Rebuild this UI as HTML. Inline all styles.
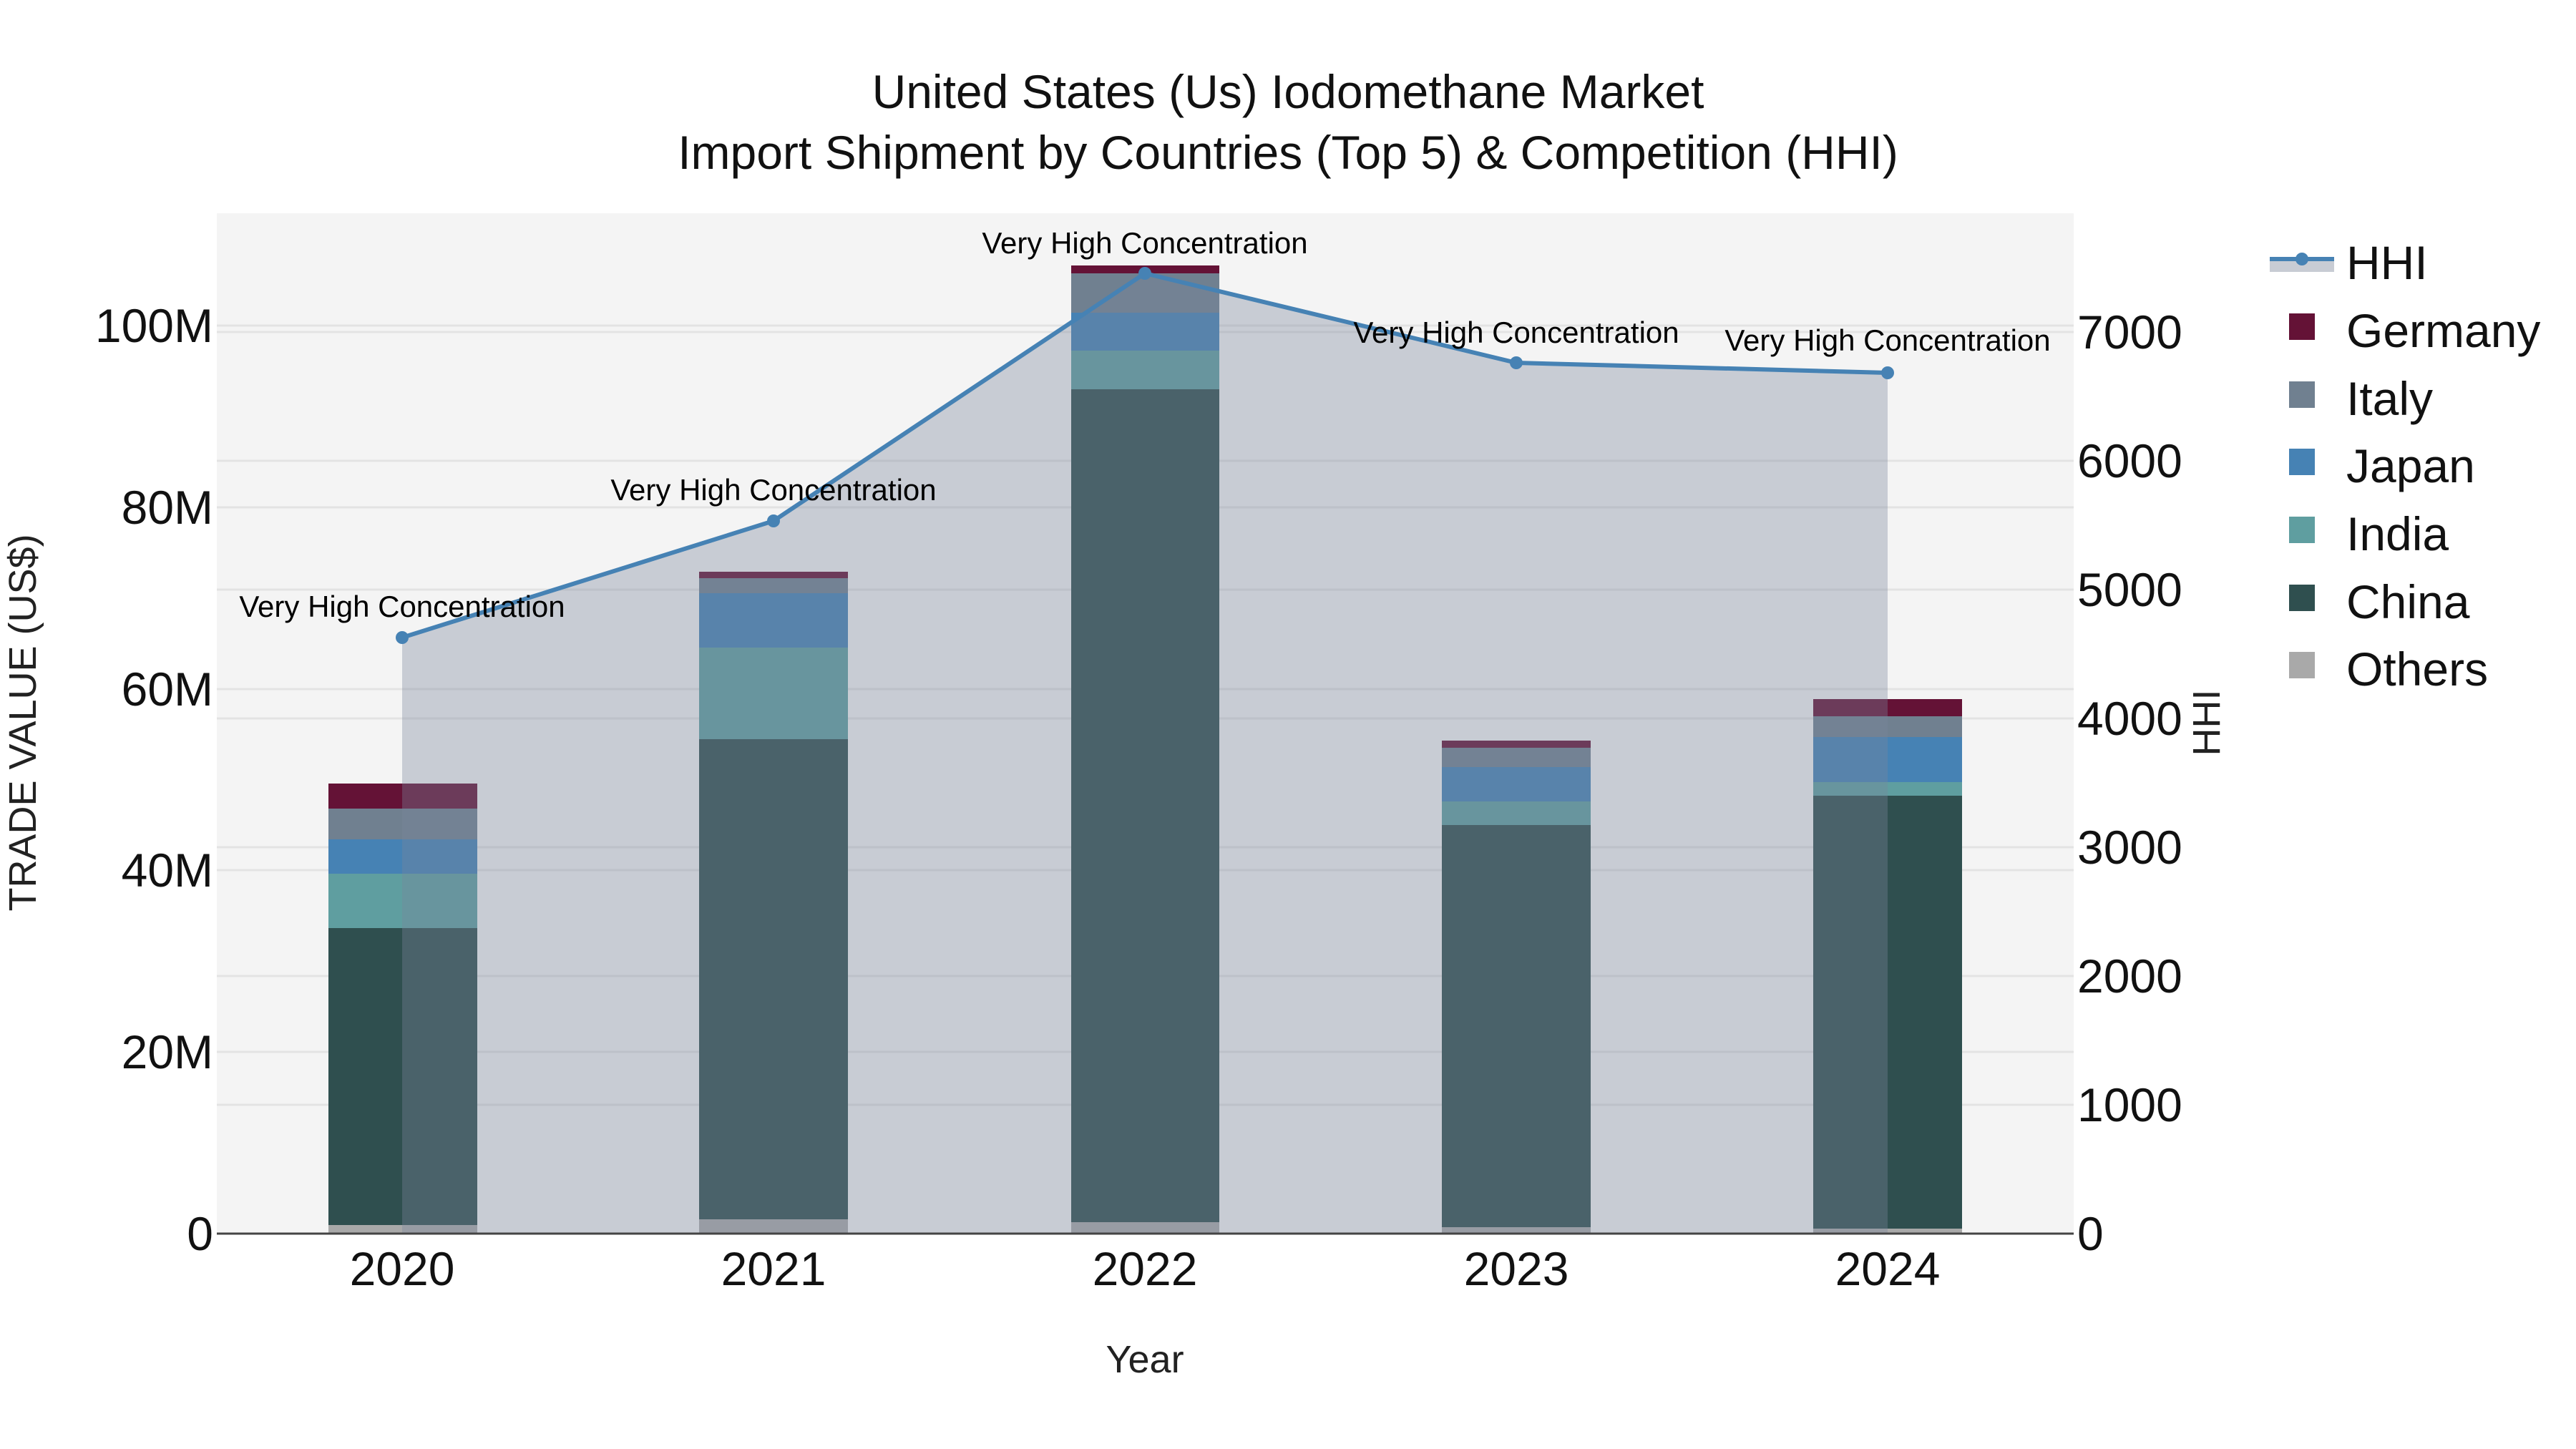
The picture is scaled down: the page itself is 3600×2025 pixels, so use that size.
<!DOCTYPE html>
<html><head><meta charset="utf-8"><style>
html,body{margin:0;padding:0;background:#fff;}
svg{display:block;font-family:"Liberation Sans",Arial,sans-serif;}
</style></head><body>
<svg width="3600" height="2025" viewBox="0 0 3600 2025" xmlns="http://www.w3.org/2000/svg">
<rect x="0" y="0" width="3600" height="2025" fill="#fff"/>
<rect x="303" y="298" width="2595" height="1426" fill="#f4f4f4"/>
<g stroke="#e3e3e3" stroke-width="3">
<line x1="303" x2="2898" y1="1470" y2="1470"/><line x1="303" x2="2898" y1="1216" y2="1216"/>
<line x1="303" x2="2898" y1="963" y2="963"/><line x1="303" x2="2898" y1="709" y2="709"/>
<line x1="303" x2="2898" y1="455" y2="455"/>
<line x1="303" x2="2898" y1="1544" y2="1544"/><line x1="303" x2="2898" y1="1364" y2="1364"/>
<line x1="303" x2="2898" y1="1184" y2="1184"/><line x1="303" x2="2898" y1="1004" y2="1004"/>
<line x1="303" x2="2898" y1="824" y2="824"/><line x1="303" x2="2898" y1="644" y2="644"/>
<line x1="303" x2="2898" y1="464" y2="464"/>
</g>
<g>
<rect x="459" y="1712" width="208" height="12" fill="#a9a9a9"/>
<rect x="459" y="1297" width="208" height="415" fill="#2f4f4f"/>
<rect x="459" y="1221" width="208" height="76" fill="#5f9ea0"/>
<rect x="459" y="1173" width="208" height="48" fill="#4682b4"/>
<rect x="459" y="1130" width="208" height="43" fill="#708090"/>
<rect x="459" y="1095" width="208" height="35" fill="#641236"/>
<rect x="977" y="1704" width="208" height="20" fill="#a9a9a9"/>
<rect x="977" y="1033" width="208" height="671" fill="#2f4f4f"/>
<rect x="977" y="905" width="208" height="128" fill="#5f9ea0"/>
<rect x="977" y="829" width="208" height="76" fill="#4682b4"/>
<rect x="977" y="808" width="208" height="21" fill="#708090"/>
<rect x="977" y="799" width="208" height="9" fill="#641236"/>
<rect x="1497" y="1708" width="207" height="16" fill="#a9a9a9"/>
<rect x="1497" y="544" width="207" height="1164" fill="#2f4f4f"/>
<rect x="1497" y="490" width="207" height="54" fill="#5f9ea0"/>
<rect x="1497" y="437" width="207" height="53" fill="#4682b4"/>
<rect x="1497" y="382" width="207" height="55" fill="#708090"/>
<rect x="1497" y="371" width="207" height="11" fill="#641236"/>
<rect x="2015" y="1715" width="208" height="9" fill="#a9a9a9"/>
<rect x="2015" y="1153" width="208" height="562" fill="#2f4f4f"/>
<rect x="2015" y="1120" width="208" height="33" fill="#5f9ea0"/>
<rect x="2015" y="1072" width="208" height="48" fill="#4682b4"/>
<rect x="2015" y="1045" width="208" height="27" fill="#708090"/>
<rect x="2015" y="1035" width="208" height="10" fill="#641236"/>
<rect x="2534" y="1717" width="208" height="7" fill="#a9a9a9"/>
<rect x="2534" y="1112" width="208" height="605" fill="#2f4f4f"/>
<rect x="2534" y="1093" width="208" height="19" fill="#5f9ea0"/>
<rect x="2534" y="1030" width="208" height="63" fill="#4682b4"/>
<rect x="2534" y="1001" width="208" height="29" fill="#708090"/>
<rect x="2534" y="977" width="208" height="24" fill="#641236"/>
</g>
<polygon points="562,891 1081,728 1600,382 2119,507 2638,521 2638,1724 562,1724" fill="rgb(122,133,155)" fill-opacity="0.36"/>
<polyline points="562,891 1081,728 1600,382 2119,507 2638,521" fill="none" stroke="#4682b4" stroke-width="6" stroke-linejoin="round"/>
<g fill="#4682b4">
<circle cx="562" cy="891" r="9"/><circle cx="1081" cy="728" r="9"/><circle cx="1600" cy="382" r="9"/><circle cx="2119" cy="507" r="9"/><circle cx="2638" cy="521" r="9"/>
</g>
<line x1="303" x2="2898" y1="1724" y2="1724" stroke="#444" stroke-width="3"/>
<g font-size="42" fill="#000" text-anchor="middle">
<text x="562" y="862">Very High Concentration</text>
<text x="1081" y="699">Very High Concentration</text>
<text x="1600" y="354">Very High Concentration</text>
<text x="2119" y="479">Very High Concentration</text>
<text x="2638" y="490">Very High Concentration</text>
</g>
<g font-size="66" fill="#111" text-anchor="middle">
<text x="1800" y="151">United States (Us) Iodomethane Market</text>
<text x="1800" y="236">Import Shipment by Countries (Top 5) &amp; Competition (HHI)</text>
</g>
<g font-size="66" fill="#111" text-anchor="end">
<text x="298" y="1747">0</text><text x="298" y="1493">20M</text><text x="298" y="1239">40M</text>
<text x="298" y="986">60M</text><text x="298" y="732">80M</text><text x="298" y="478">100M</text>
</g>
<g font-size="66" fill="#111" text-anchor="start">
<text x="2903" y="1747">0</text><text x="2903" y="1567">1000</text><text x="2903" y="1387">2000</text>
<text x="2903" y="1207">3000</text><text x="2903" y="1027">4000</text><text x="2903" y="847">5000</text>
<text x="2903" y="667">6000</text><text x="2903" y="487">7000</text>
</g>
<g font-size="66" fill="#111" text-anchor="middle">
<text x="562" y="1796">2020</text><text x="1081" y="1796">2021</text><text x="1600" y="1796">2022</text>
<text x="2119" y="1796">2023</text><text x="2638" y="1796">2024</text>
</g>
<text x="1600" y="1918" font-size="54" fill="#222" text-anchor="middle">Year</text>
<text transform="translate(50,1010) rotate(-90)" font-size="54" fill="#222" text-anchor="middle">TRADE VALUE (US$)</text>
<text transform="translate(3102,1010) rotate(-90)" font-size="54" fill="#222" text-anchor="middle">HHI</text>
<rect x="3172" y="362" width="90" height="18" fill="#c8ccd4"/>
<line x1="3172" x2="3262" y1="362" y2="362" stroke="#4682b4" stroke-width="6"/>
<circle cx="3217" cy="362" r="9" fill="#4682b4"/>
<g>
<rect x="3199" y="438" width="36" height="37" fill="#641236"/>
<rect x="3199" y="533" width="36" height="37" fill="#708090"/>
<rect x="3199" y="627" width="36" height="37" fill="#4682b4"/>
<rect x="3199" y="722" width="36" height="37" fill="#5f9ea0"/>
<rect x="3199" y="817" width="36" height="37" fill="#2f4f4f"/>
<rect x="3199" y="911" width="36" height="37" fill="#a9a9a9"/>
</g>
<g font-size="66" fill="#111">
<text x="3279" y="390">HHI</text>
<text x="3279" y="485">Germany</text>
<text x="3279" y="580">Italy</text>
<text x="3279" y="674">Japan</text>
<text x="3279" y="769">India</text>
<text x="3279" y="864">China</text>
<text x="3279" y="958">Others</text>
</g>
</svg>
</body></html>
